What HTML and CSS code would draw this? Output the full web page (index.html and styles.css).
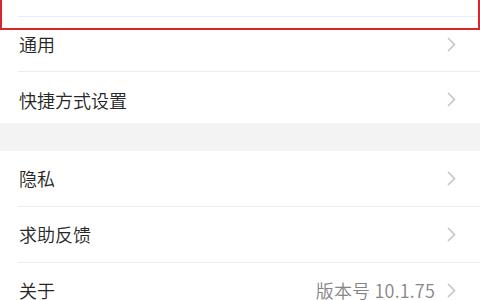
FILE: index.html
```html
<!DOCTYPE html>
<html lang="zh">
<head>
<meta charset="utf-8">
<link rel="stylesheet" href="styles.css">
</head>
<body>
<div class="screen">
  <div class="list">
    <div class="row row-clip sep"></div>
    <div class="row row-a sep"><span class="label">通用</span><span class="chev"><svg width="9" height="15" viewBox="0 0 9 15"><path d="M1 1 L7.5 7.5 L1 14" fill="none" stroke="#c5c5c5" stroke-width="1.6"/></svg></span></div>
    <div class="row row-b"><span class="label">快捷方式设置</span><span class="chev"><svg width="9" height="15" viewBox="0 0 9 15"><path d="M1 1 L7.5 7.5 L1 14" fill="none" stroke="#c5c5c5" stroke-width="1.6"/></svg></span></div>
  </div>
  <div class="gap"></div>
  <div class="list">
    <div class="row row-c sep"><span class="label">隐私</span><span class="chev"><svg width="9" height="15" viewBox="0 0 9 15"><path d="M1 1 L7.5 7.5 L1 14" fill="none" stroke="#c5c5c5" stroke-width="1.6"/></svg></span></div>
    <div class="row row-c sep"><span class="label">求助反馈</span><span class="chev"><svg width="9" height="15" viewBox="0 0 9 15"><path d="M1 1 L7.5 7.5 L1 14" fill="none" stroke="#c5c5c5" stroke-width="1.6"/></svg></span></div>
    <div class="row row-c"><span class="label">关于</span><span class="value">版本号 10.1.75</span><span class="chev"><svg width="9" height="15" viewBox="0 0 9 15"><path d="M1 1 L7.5 7.5 L1 14" fill="none" stroke="#c5c5c5" stroke-width="1.6"/></svg></span></div>
  </div>
  <div class="highlight"></div>
</div>
</body>
</html>
```
FILE: styles.css
```css
* { box-sizing: border-box; }
html, body { margin: 0; padding: 0; background: #ffffff; }
body {
  width: 480px;
  height: 300px;
  overflow: hidden;
  font-family: "Noto Sans CJK SC", "Noto Sans", sans-serif;
}
.screen {
  position: relative;
  width: 480px;
  height: 300px;
  overflow: hidden;
  background: #ffffff;
}
.list { display: flex; flex-direction: column; background: #ffffff; }
.row {
  position: relative;
  display: flex;
  align-items: center;
  padding: 0 24px 0 19px;
  font-size: 18px;
  font-weight: 350;
  color: #262626;
}
.sep::after {
  content: "";
  position: absolute;
  left: 18px;
  right: 0;
  bottom: 0;
  height: 1px;
  background: #ececec;
}
.row-clip { height: 17px; }
.row-a { height: 55px; padding-bottom: 1px; }
.row-b { height: 51px; padding-top: 4px; }
.row-c { height: 56px; padding-bottom: 2px; }
.label { flex: 1; line-height: 24px; }
.value { color: #858585; line-height: 24px; margin-right: 12px; letter-spacing: 0.2px; }
.chev { display: flex; width: 9px; height: 15px; }
.gap { height: 28px; background: #f3f3f3; }
.highlight {
  position: absolute;
  left: 0;
  top: -4px;
  width: 480px;
  height: 34px;
  border: 2px solid #d8262c;
}
```
